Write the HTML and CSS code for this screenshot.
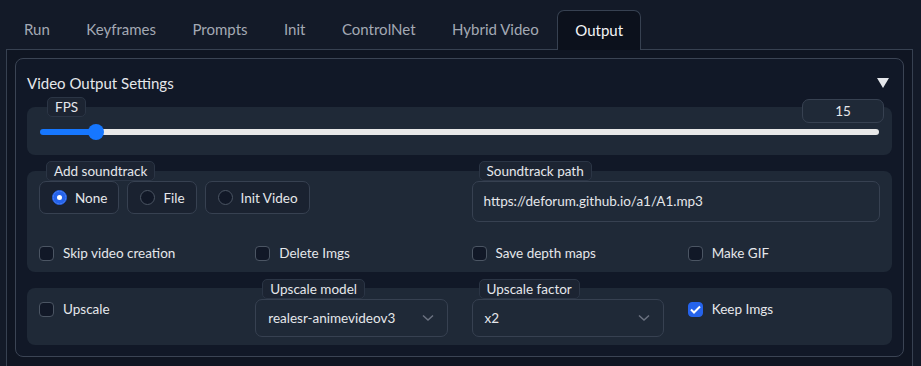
FILE: index.html
```html
<!DOCTYPE html>
<html lang="en">
<head>
  <meta charset="UTF-8">
  <meta name="viewport" content="width=device-width, initial-scale=1">
  <title>Deforum Output</title>
  <link rel="stylesheet" href="styles.css">
</head>
<body>
  <div class="app">
    <div class="tabs">
      <a class="tab">Run</a>
      <a class="tab">Keyframes</a>
      <a class="tab">Prompts</a>
      <a class="tab">Init</a>
      <a class="tab">ControlNet</a>
      <a class="tab">Hybrid Video</a>
      <a class="tab active">Output</a>
    </div>

    <div class="panel">
      <div class="accordion">
        <div class="acc-head">
          <span>Video Output Settings</span>
          <svg class="caret" width="12" height="10" viewBox="0 0 12 10"><polygon points="0,0 12,0 6,10" fill="#e5e7eb"/></svg>
        </div>

        <div class="row fps-row">
          <div class="fps-head">
            <span class="badge">FPS</span>
            <div class="num">15</div>
          </div>
          <div class="slider">
            <div class="fill" style="width: 56px"></div>
            <div class="thumb"></div>
            <div class="rest"></div>
          </div>
        </div>

        <div class="row sound-row">
          <div class="cols2">
            <div class="field">
              <span class="badge">Add soundtrack</span>
              <div class="radios">
                <label class="radio checked"><span class="dot"></span>None</label>
                <label class="radio"><span class="dot"></span>File</label>
                <label class="radio"><span class="dot"></span>Init Video</label>
              </div>
            </div>
            <div class="field">
              <span class="badge">Soundtrack path</span>
              <div class="textbox">https://deforum.github.io/a1/A1.mp3</div>
            </div>
          </div>
          <div class="cols4 checks">
            <label class="check"><span class="box"></span>Skip video creation</label>
            <label class="check"><span class="box"></span>Delete Imgs</label>
            <label class="check"><span class="box"></span>Save depth maps</label>
            <label class="check"><span class="box"></span>Make GIF</label>
          </div>
        </div>

        <div class="row upscale-row">
          <div class="cols4">
            <label class="check top"><span class="box"></span>Upscale</label>
            <div class="field">
              <span class="badge">Upscale model</span>
              <div class="select">realesr-animevideov3
                <svg width="12" height="8" viewBox="0 0 12 8"><polyline points="1,1.5 6,6 11,1.5" fill="none" stroke="#6b7280" stroke-width="1.5"/></svg>
              </div>
            </div>
            <div class="field">
              <span class="badge">Upscale factor</span>
              <div class="select">x2
                <svg width="12" height="8" viewBox="0 0 12 8"><polyline points="1,1.5 6,6 11,1.5" fill="none" stroke="#6b7280" stroke-width="1.5"/></svg>
              </div>
            </div>
            <label class="check top"><span class="box on"><svg width="11" height="9" viewBox="0 0 11 9"><polyline points="1,4.5 4,7.5 10,1.5" fill="none" stroke="#fff" stroke-width="2"/></svg></span>Keep Imgs</label>
          </div>
        </div>
      </div>
    </div>
  </div>
</body>
</html>
```

FILE: styles.css
```css
* { margin: 0; padding: 0; box-sizing: border-box; }
body {
  font-family: 'Lato', 'Noto Sans', sans-serif;
  background: #131a28;
  color: #e5e7eb;
  font-size: 13.5px;
  height: 366px;
  overflow: hidden;
}
.app { padding: 10px 8px 0 6px; }

/* tabs */
.tabs { display: flex; height: 39px; padding-left: 0; }
.tab {
  padding: 0 18.5px 0 18px;
  line-height: 38px;
  font-size: 15px;
  color: #a3a9b4;
}
.tab.active {
  color: #f3f4f6;
  background: #0c111c;
  border: 1px solid #374151;
  border-bottom: none;
  border-radius: 7px 7px 0 0;
  position: relative;
  z-index: 1;
  height: 40px;
  margin-left: 0;
  padding: 0 17px;
  line-height: 38px;
}
.panel {
  border: 1px solid #374151;
  border-bottom: none;
  background: #0f1522;
  padding: 8px 8px 0;
  height: 320px;
}

/* accordion */
.accordion {
  border: 1px solid #3b4454;
  border-radius: 8px;
  background: #111827;
  padding: 12px 11px 11px;
}
.acc-head {
  display: flex;
  justify-content: space-between;
  align-items: center;
  height: 24px;
  font-size: 15px;
  margin-bottom: 12px;
  padding-right: 3px;
}

.row {
  display: flow-root;
  background: #1f2937;
  border-radius: 8px;
  padding: 0 12px;
  margin-bottom: 16px;
}
.row:last-child { margin-bottom: 0; }

.badge {
  display: inline-block;
  height: 20px;
  line-height: 18px;
  padding: 0 7px;
  font-size: 13.5px;
  color: #e5e7eb;
  background: #1c2432;
  border: 1px solid #2b3545;
  border-radius: 5px;
  margin-left: 7px;
  align-self: flex-start;
}

/* fps */
.fps-row { padding-bottom: 15px; }
.fps-head {
  display: flex;
  justify-content: space-between;
  align-items: flex-start;
  height: 26px;
  margin-top: -10px;
}
.fps-head .badge { margin-left: 8px; }
.num {
  margin-top: 2px;
  margin-right: -4px;
  width: 82px;
  height: 24px;
  line-height: 22px;
  text-align: center;
  font-size: 13.5px;
  background: #1f2937;
  border: 1px solid #374151;
  border-radius: 7px;
}
.slider { display: flex; align-items: center; height: 16px; margin-top: 1px; }
.fill { height: 6px; background: #1677ff; border-radius: 3px 0 0 3px; margin-left: 1px; }
.thumb { width: 16px; height: 16px; border-radius: 50%; background: #1677ff; margin-left: -8px; position: relative; }
.rest { flex: 1; height: 6px; background: #e8e8e8; border-radius: 0 3px 3px 0; margin-left: -8px; margin-right: 1px; }

/* soundtrack */
.field { display: flex; flex-direction: column; }
.cols2 { display: grid; grid-template-columns: 1fr 1fr; gap: 24px; margin-top: -10px; }
.cols4 { display: grid; grid-template-columns: repeat(4, 1fr); gap: 24px; }
.radios { display: flex; gap: 8px; }
.radio {
  display: flex;
  align-items: center;
  gap: 8px;
  height: 33px;
  padding: 0 11px 0 12px;
  border: 1px solid #374151;
  border-radius: 7px;
  background: #1a2230;
}
.dot {
  width: 15px;
  height: 15px;
  border-radius: 50%;
  border: 1px solid #4b5563;
  background: #111827;
}
.radio.checked .dot {
  background: #2563eb;
  border-color: #2563eb;
  box-shadow: inset 0 0 0 4px #2563eb, inset 0 0 0 8px #fff;
}
.textbox {
  height: 41px;
  line-height: 39px;
  padding: 0 11px;
  border: 1px solid #374151;
  border-radius: 7px;
  background: #1f2937;
}
.checks { padding: 21px 0 9px; }
.check { display: flex; align-items: center; gap: 9px; height: 20px; }
.box {
  width: 15px;
  height: 15px;
  border: 1px solid #4b5563;
  border-radius: 4px;
  background: #111827;
  display: flex;
  align-items: center;
  justify-content: center;
}
.box.on { background: #2563eb; border-color: #2563eb; }

/* upscale */
.upscale-row { padding-bottom: 8px; }
.upscale-row .cols4 { margin-top: -9px; }
.check.top { margin-top: 20px; height: 20px; }
.select {
  height: 38px;
  padding: 0 13px 0 12px;
  border: 1px solid #374151;
  border-radius: 7px;
  background: #1f2937;
  display: flex;
  align-items: center;
  justify-content: space-between;
}
```
